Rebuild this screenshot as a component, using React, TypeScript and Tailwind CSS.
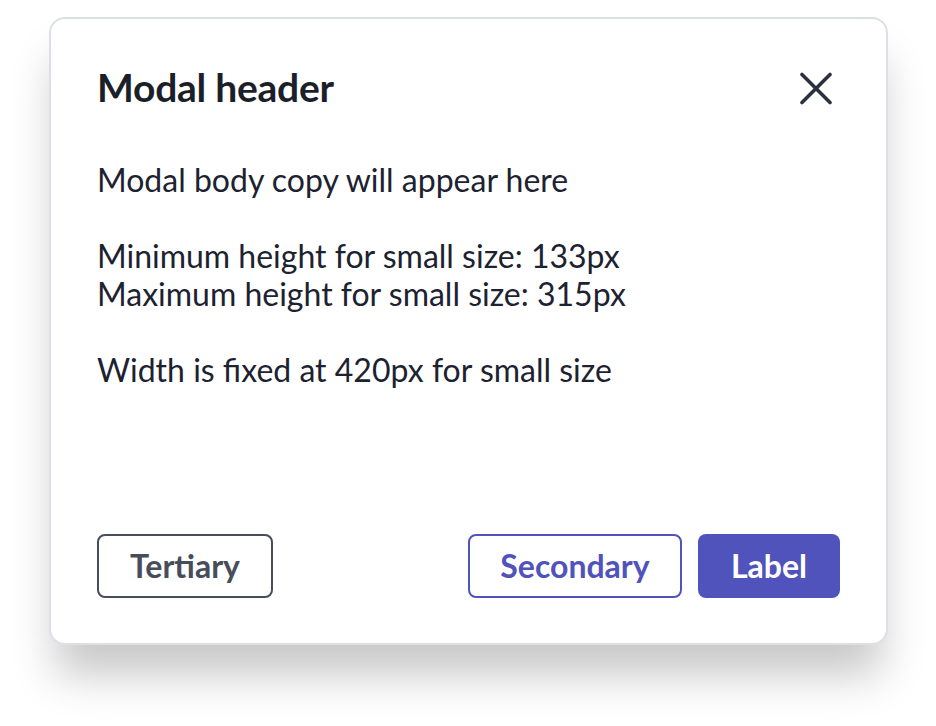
export default function App() {
  return (
    <div className="min-h-[726px] w-[936px] bg-white pl-[49px] pt-[17px]" style={{ fontFamily: "Lato, 'Noto Sans', sans-serif" }}>
      <div className="flex h-[628px] w-[839px] flex-col rounded-[16px] border-2 border-[#dcdfe4] bg-white px-[46px] pb-[45px] pt-[44px] shadow-[0_36px_44px_-6px_rgba(0,0,0,0.22)]">
        <div className="flex items-start justify-between">
          <h2 className="text-[39px] font-bold leading-[48px] tracking-[-0.25px] text-[#1b1f29]">Modal header</h2>
          <button type="button" className="mr-[8px] mt-[9px] text-[#2b313e]">
            <svg width="32" height="33" viewBox="0 0 32 33" fill="none" stroke="currentColor" strokeWidth="3.6" strokeLinecap="round">
              <path d="M2 2.5 L30 30.5" />
              <path d="M30 2.5 L2 30.5" />
            </svg>
          </button>
        </div>
        <div className="mt-[50px] flex-1 text-[32px] leading-[38px] text-[#1d2230]">
          <p>Modal body copy will appear here</p>
          <p className="mt-[38px]">Minimum height for small size: 133px</p>
          <p>Maximum height for small size: 315px</p>
          <p className="mt-[38px]">Width is fixed at 420px for small size</p>
        </div>
        <div className="flex items-center justify-between">
          <button type="button" className="h-[64px] w-[176px] rounded-[8px] border-2 border-[#474d5a] text-[32px] font-bold text-[#474d5a]">
            Tertiary
          </button>
          <div className="flex gap-[16px]">
            <button type="button" className="h-[64px] w-[214px] rounded-[8px] border-2 border-[#5053bb] text-[32px] font-bold text-[#5053bb]">
              Secondary
            </button>
            <button type="button" className="h-[64px] w-[142px] rounded-[8px] bg-[#5053bb] text-[32px] font-bold text-white">
              Label
            </button>
          </div>
        </div>
      </div>
    </div>
  );
}
